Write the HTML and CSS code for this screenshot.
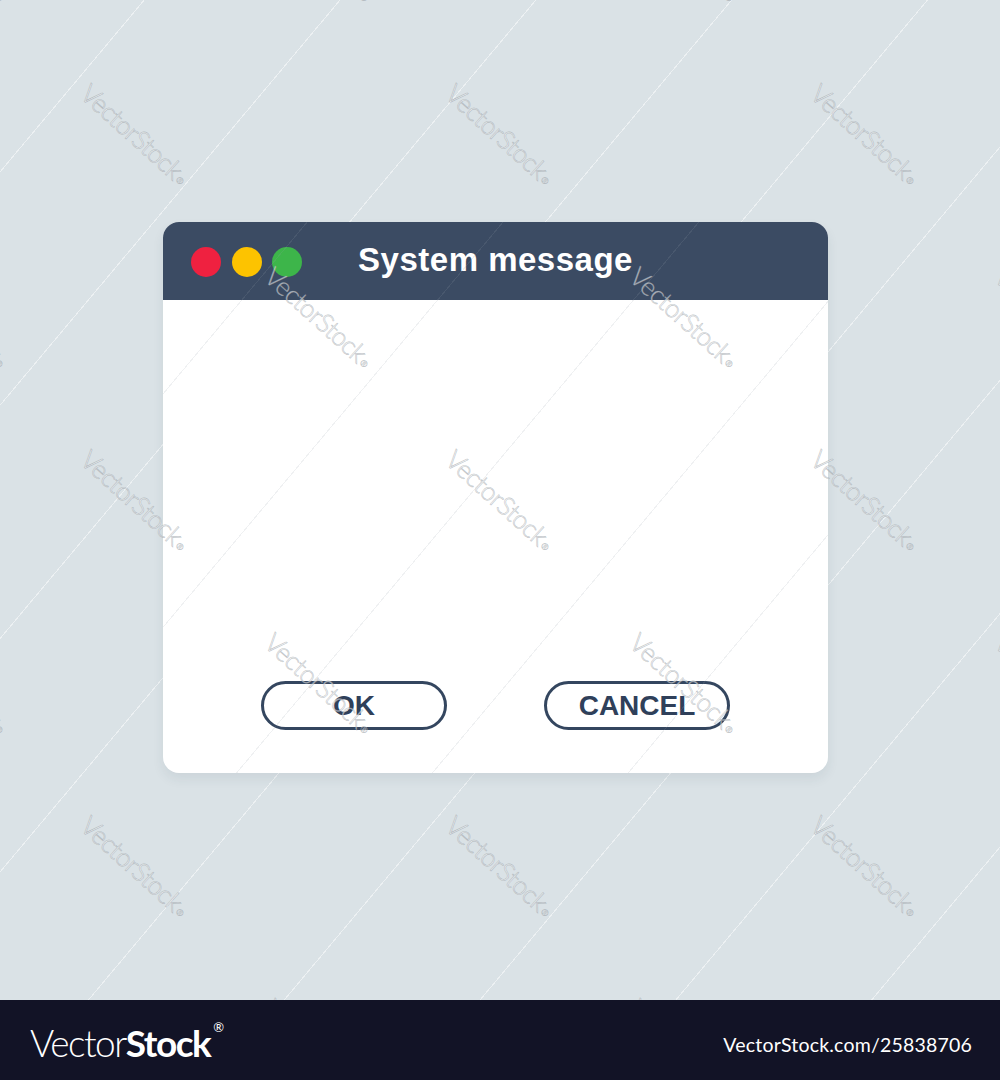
FILE: index.html
```html
<!DOCTYPE html>
<html lang="en">
<head>
<meta charset="utf-8">
<title>System message</title>
<link rel="stylesheet" href="styles.css">
</head>
<body>
<main class="stage">
  <section class="dialog">
    <header class="titlebar">
      <div class="dots">
        <span class="dot dot-red"></span>
        <span class="dot dot-yellow"></span>
        <span class="dot dot-green"></span>
      </div>
      <h1 class="title">System message</h1>
      <div class="spacer"></div>
    </header>
    <div class="dialog-body">
      <div class="actions">
        <button class="btn">OK</button>
        <button class="btn">CANCEL</button>
      </div>
    </div>
  </section>
  <div class="watermarks" aria-hidden="true">
    <div class="wm-row wm-even wm-top"><span class="wm"><i>VectorStock<b>®</b></i></span><span class="wm"><i>VectorStock<b>®</b></i></span><span class="wm"><i>VectorStock<b>®</b></i></span><span class="wm"><i>VectorStock<b>®</b></i></span></div>
    <div class="wm-row wm-odd"><span class="wm"><i>VectorStock<b>®</b></i></span><span class="wm"><i>VectorStock<b>®</b></i></span><span class="wm"><i>VectorStock<b>®</b></i></span></div>
    <div class="wm-row wm-even"><span class="wm"><i>VectorStock<b>®</b></i></span><span class="wm"><i>VectorStock<b>®</b></i></span><span class="wm"><i>VectorStock<b>®</b></i></span><span class="wm"><i>VectorStock<b>®</b></i></span></div>
    <div class="wm-row wm-odd"><span class="wm"><i>VectorStock<b>®</b></i></span><span class="wm"><i>VectorStock<b>®</b></i></span><span class="wm"><i>VectorStock<b>®</b></i></span></div>
    <div class="wm-row wm-even"><span class="wm"><i>VectorStock<b>®</b></i></span><span class="wm"><i>VectorStock<b>®</b></i></span><span class="wm"><i>VectorStock<b>®</b></i></span><span class="wm"><i>VectorStock<b>®</b></i></span></div>
    <div class="wm-row wm-odd"><span class="wm"><i>VectorStock<b>®</b></i></span><span class="wm"><i>VectorStock<b>®</b></i></span><span class="wm"><i>VectorStock<b>®</b></i></span></div>
    <div class="wm-row wm-even"><span class="wm"><i>VectorStock<b>®</b></i></span><span class="wm"><i>VectorStock<b>®</b></i></span><span class="wm"><i>VectorStock<b>®</b></i></span><span class="wm"><i>VectorStock<b>®</b></i></span></div>
  </div>
</main>
<footer class="footer">
  <div class="logo"><span class="logo-light">Vector</span><span class="logo-bold">Stock</span><sup class="logo-reg">®</sup></div>
  <div class="url">VectorStock.com/25838706</div>
</footer>
</body>
</html>
```

FILE: styles.css
```css
* { box-sizing: border-box; }

html, body {
  margin: 0;
  padding: 0;
}

body {
  width: 1000px;
  height: 1080px;
  overflow: hidden;
  font-family: "Liberation Sans", Arial, sans-serif;
  background: #dae2e6;
}

.stage {
  position: relative;
  height: 1000px;
  padding-top: 222px;
  padding-left: 163px;
  overflow: hidden;
  background-color: #dae2e6;
  background-image: repeating-linear-gradient(130deg,
    transparent 0px, transparent 110px,
    rgba(255, 255, 255, 0.5) 110px, rgba(255, 255, 255, 0.5) 111px,
    transparent 111px, transparent 150px);
}

.dialog {
  position: relative;
  width: 665px;
  height: 551px;
  background: #ffffff;
  border-radius: 16px;
  overflow: hidden;
  display: flex;
  flex-direction: column;
  box-shadow: 0 6px 12px rgba(40, 60, 80, 0.08);
  z-index: 1;
}

.dialog::after {
  content: "";
  position: absolute;
  inset: 0;
  pointer-events: none;
  background-image: repeating-linear-gradient(130deg,
    transparent 0px, transparent 110px,
    rgba(150, 160, 170, 0.15) 110px, rgba(150, 160, 170, 0.15) 111px,
    transparent 111px, transparent 150px);
}

.titlebar {
  height: 78px;
  flex: 0 0 78px;
  background: #3b4b63;
  display: grid;
  grid-template-columns: 1fr auto 1fr;
  align-items: center;
}

.dots {
  display: flex;
  gap: 10.5px;
  padding-left: 28px;
  padding-top: 2px;
}

.dot {
  width: 30px;
  height: 30px;
  border-radius: 50%;
}

.dot-red { background: #ef2140; }
.dot-yellow { background: #fdc300; }
.dot-green { background: #3db54a; }

.title {
  margin: 0;
  color: #ffffff;
  font-family: "Liberation Sans", Arial, sans-serif;
  font-weight: 700;
  font-size: 33px;
  letter-spacing: 0.5px;
  line-height: 1;
  padding-bottom: 3px;
}

.dialog-body {
  flex: 1;
  display: flex;
  flex-direction: column;
  justify-content: flex-end;
  padding: 0 98px 43px;
}

.actions {
  display: flex;
  justify-content: space-between;
}

.btn {
  width: 186px;
  height: 49px;
  border: 3px solid #34465f;
  border-radius: 25px;
  background: #ffffff;
  color: #2f405a;
  font-family: "Liberation Sans", Arial, sans-serif;
  font-weight: 700;
  font-size: 28px;
  line-height: 1;
  padding: 0;
  padding-top: 1px;
  cursor: pointer;
}

/* watermark overlay */
.watermarks {
  position: absolute;
  top: 0;
  left: 0;
  width: 1000px;
  height: 1000px;
  pointer-events: none;
  z-index: 2;
  margin-top: -141px;
}

.wm-row {
  display: flex;
  height: 183px;
}

.wm-odd { margin-left: -47px; }
.wm-even { margin-left: -228px; }

.wm {
  flex: 0 0 365px;
  display: flex;
  align-items: center;
  justify-content: center;
}

.wm i {
  font-style: normal;
  display: block;
  transform: rotate(42deg);
  font-family: Lato, "Open Sans", sans-serif;
  font-weight: 300;
  font-size: 26px;
  letter-spacing: -0.8px;
  color: rgba(255, 255, 255, 0.6);
  -webkit-text-stroke: 0.6px rgba(130, 138, 146, 0.5);
  white-space: nowrap;
}

.wm b {
  font-weight: 400;
  font-size: 9px;
  vertical-align: 2px;
  margin-left: 2px;
  -webkit-text-stroke: 0.4px rgba(130, 138, 146, 0.5);
}

/* footer */
.footer {
  height: 80px;
  background: #121326;
  display: flex;
  justify-content: space-between;
  align-items: center;
  padding: 0 28px 0 30px;
  color: #ffffff;
}

.logo {
  font-family: Lato, "Open Sans", sans-serif;
  font-size: 37px;
  line-height: 1;
  letter-spacing: -1.5px;
  padding-top: 4px;
}

.logo-light { font-weight: 300; }
.logo-bold { font-weight: 700; }

.logo-reg {
  font-size: 13px;
  font-weight: 400;
  vertical-align: top;
  position: relative;
  top: -3px;
  margin-left: 3px;
  letter-spacing: 0;
}

.url {
  font-family: Lato, "Open Sans", sans-serif;
  font-size: 19.5px;
  font-weight: 400;
  letter-spacing: 0.2px;
  padding-top: 8px;
}
```
